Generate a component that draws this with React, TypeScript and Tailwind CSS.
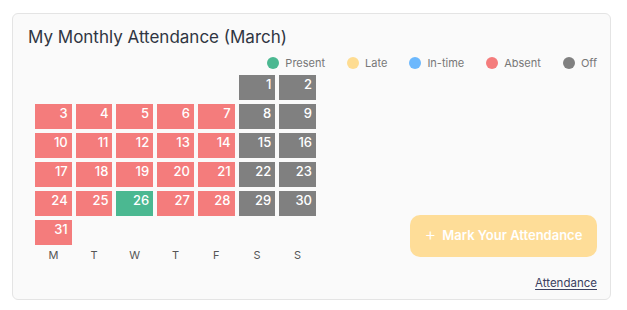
import React from "react";

type S = "a" | "o" | "p" | "e";

const cells: { d: number; s: S }[] = [];
for (let d = 1; d <= 31; d++) {
  const col = (d + 4) % 7;
  let s: S = col >= 5 ? "o" : "a";
  if (d === 26) s = "p";
  cells.push({ d, s });
}

const bg: Record<S, string> = {
  a: "bg-[#f47c7c]",
  o: "bg-[#808080]",
  p: "bg-[#4bb891]",
  e: "",
};

const legend = [
  { label: "Present", c: "bg-[#4bb891]" },
  { label: "Late", c: "bg-[#fedc91]" },
  { label: "In-time", c: "bg-[#6cb8fd]" },
  { label: "Absent", c: "bg-[#f47c7c]" },
  { label: "Off", c: "bg-[#808080]" },
];

export default function App() {
  const blanks = Array.from({ length: 5 });
  return (
    <div
      className="pt-[13px] pl-3"
      style={{ fontFamily: "Inter, 'Noto Sans', sans-serif" }}
    >
      <div className="w-[599px] h-[287px] rounded-md border border-[#e4e4e4] bg-[#fafafa] pl-[15px] pr-[13px] pt-[11px] flex flex-col">
        <div className="text-[17px] leading-6 text-[#2f3542]">
          My Monthly Attendance (March)
        </div>
        <div className="flex justify-end items-center gap-[22px] mt-[6px] h-4">
          {legend.map((l) => (
            <div key={l.label} className="flex items-center gap-[6px]">
              <span className={`w-3 h-3 rounded-full ${l.c}`} />
              <span className="text-[11px] text-[#777]">{l.label}</span>
            </div>
          ))}
        </div>
        <div className="flex mt-[4px]">
          <div className="ml-[7px] w-[281px]">
            <div className="grid grid-cols-7 gap-1">
              {blanks.map((_, i) => (
                <div key={"b" + i} className="h-[25px]" />
              ))}
              {cells.map((c) => (
                <div
                  key={c.d}
                  className={`h-[25px] ${bg[c.s]} text-white text-[13px] font-medium leading-4 text-right pr-1 pt-[1px]`}
                >
                  {c.d}
                </div>
              ))}
            </div>
            <div className="grid grid-cols-7 gap-1 mt-[2px] text-[11px] text-[#555] text-center leading-4">
              {["M", "T", "W", "T", "F", "S", "S"].map((d, i) => (
                <div key={i}>{d}</div>
              ))}
            </div>
          </div>
          <div className="flex-1 flex flex-col justify-end items-end pb-[6px]">
            <button className="w-[187px] h-[42px] rounded-[10px] bg-[#fedd98] text-white text-[13px] font-semibold flex items-center justify-center gap-[6px]">
              <span className="text-[18px] font-light leading-none -mt-[2px]">+</span>
              <span>Mark Your Attendance</span>
            </button>
          </div>
        </div>
        <div className="flex justify-end mt-[12px]">
          <a className="text-[11.5px] text-[#3b4160] underline underline-offset-2 cursor-pointer">
            Attendance
          </a>
        </div>
      </div>
    </div>
  );
}
